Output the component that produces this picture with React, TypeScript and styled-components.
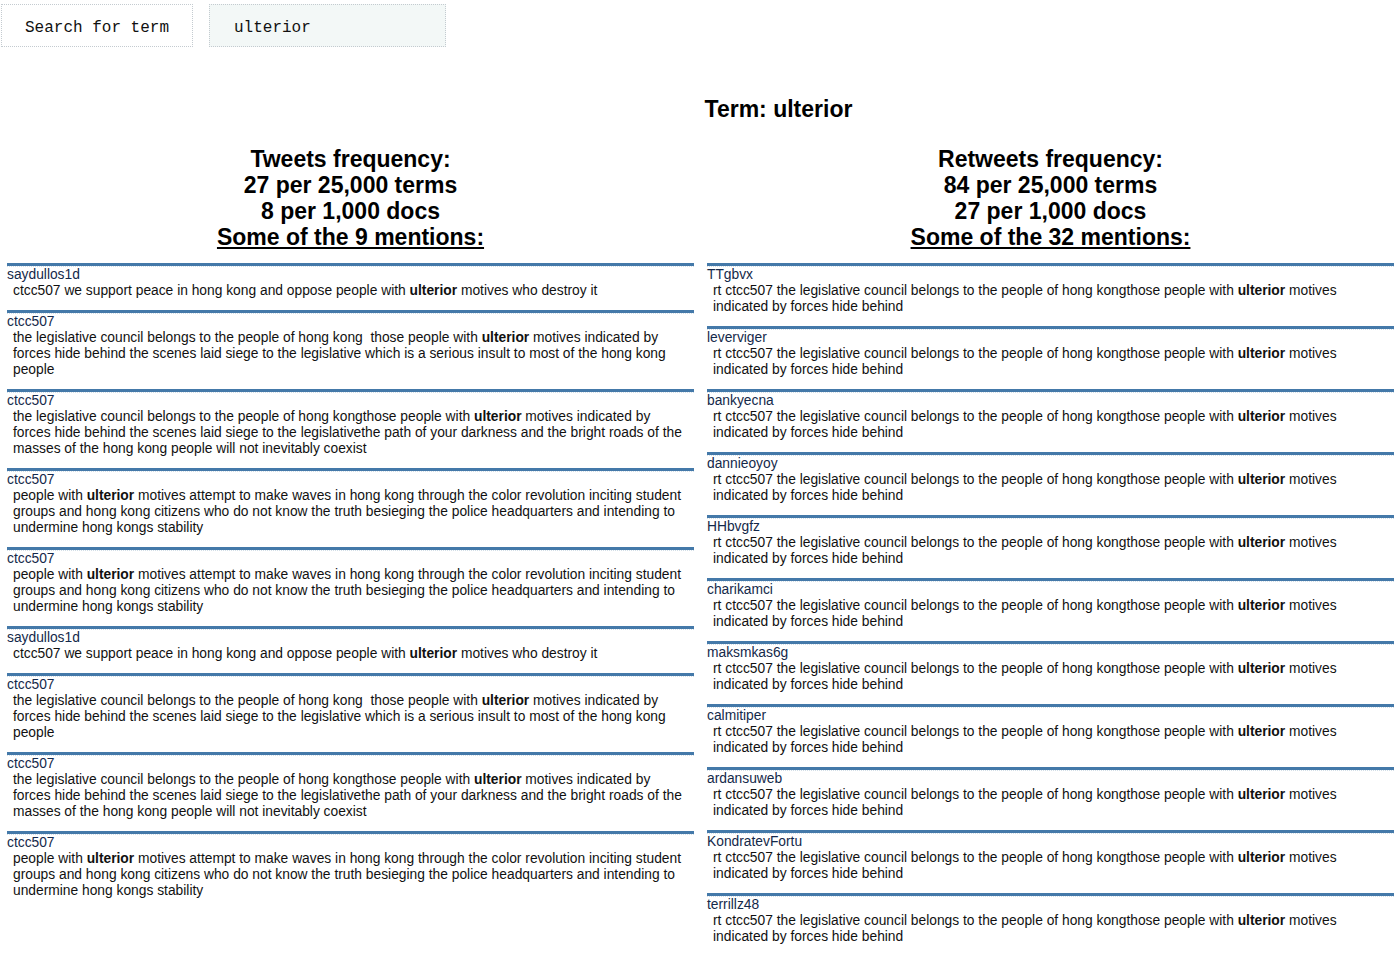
import React from "react";
import styled, { createGlobalStyle } from "styled-components";

const Global = createGlobalStyle`
  html, body { margin: 0; padding: 0; background: #fff; }
  body { font-family: "Liberation Sans", Arial, sans-serif; color: #000; }
`;

const Page = styled.div`
  width: 1400px;
  min-height: 954px;
`;

const SearchBar = styled.div`
  display: flex;
  gap: 16px;
  padding: 4px 0 0 1px;
`;

const SearchButton = styled.button`
  width: 192px;
  height: 43px;
  box-sizing: border-box;
  border: 1px dotted #c4cbd0;
  background: #fff;
  font-family: "Liberation Mono", "Courier New", monospace;
  font-size: 16px;
  color: #111;
  padding: 4px 0 0 23px;
  text-align: left;
`;

const SearchInput = styled.input`
  width: 237px;
  height: 43px;
  box-sizing: border-box;
  border: 1px dotted #c4cbd0;
  background: #f3f8f7;
  font-family: "Liberation Mono", "Courier New", monospace;
  font-size: 16px;
  color: #111;
  padding: 4px 0 0 24px;
  outline: none;
  caret-color: #000;
`;

const TermTitle = styled.h2`
  margin: 49px 0 0 0;
  padding-left: 157px;
  text-align: center;
  font-size: 23px;
  line-height: 26px;
  font-weight: bold;
`;

const Columns = styled.div`
  display: grid;
  grid-template-columns: 687px 687px;
  column-gap: 13px;
  padding: 0 6px 0 7px;
  margin-top: 24px;
`;

const Column = styled.section`
  display: flex;
  flex-direction: column;
`;

const ColumnHead = styled.h3`
  margin: 0 0 13px 0;
  text-align: center;
  font-size: 23px;
  line-height: 26px;
  font-weight: bold;
`;

const Underlined = styled.span`
  text-decoration: underline;
`;

const Entry = styled.div`
  border-top: 3px solid #4479a9;
  padding-bottom: 11px;
  font-size: 13.8px;
  line-height: 16px;
`;

const User = styled.div`
  border-top: 1px dotted #d3dfe8;
  color: #14294a;
`;

const Body = styled.div`
  padding: 0 10px 0 6px;
  white-space: pre-wrap;
  color: #111;
`;

type Tweet = { user: string; pre: string; post: string };

const L1 = {
  pre: "ctcc507 we support peace in hong kong and oppose people with ",
  post: " motives who destroy it",
};
const L2 = {
  pre: "the legislative council belongs to the people of hong kong  those people with ",
  post: " motives indicated by forces hide behind the scenes laid siege to the legislative which is a serious insult to most of the hong kong people",
};
const L3 = {
  pre: "the legislative council belongs to the people of hong kongthose people with ",
  post: " motives indicated by forces hide behind the scenes laid siege to the legislativethe path of your darkness and the bright roads of the masses of the hong kong people will not inevitably coexist",
};
const L4 = {
  pre: "people with ",
  post: " motives attempt to make waves in hong kong through the color revolution inciting student groups and hong kong citizens who do not know the truth besieging the police headquarters and intending to undermine hong kongs stability",
};

const tweets: Tweet[] = [
  { user: "saydullos1d", ...L1 },
  { user: "ctcc507", ...L2 },
  { user: "ctcc507", ...L3 },
  { user: "ctcc507", ...L4 },
  { user: "ctcc507", ...L4 },
  { user: "saydullos1d", ...L1 },
  { user: "ctcc507", ...L2 },
  { user: "ctcc507", ...L3 },
  { user: "ctcc507", ...L4 },
];

const RT = {
  pre: "rt ctcc507 the legislative council belongs to the people of hong kongthose people with ",
  post: " motives indicated by forces hide behind",
};

const retweets: Tweet[] = [
  "TTgbvx",
  "leverviger",
  "bankyecna",
  "dannieoyoy",
  "HHbvgfz",
  "charikamci",
  "maksmkas6g",
  "calmitiper",
  "ardansuweb",
  "KondratevFortu",
  "terrillz48",
].map((user) => ({ user, ...RT }));

function EntryList({ items }: { items: Tweet[] }) {
  return (
    <>
      {items.map((t, i) => (
        <Entry key={i}>
          <User>{t.user}</User>
          <Body>
            {t.pre}
            <b>ulterior</b>
            {t.post}
          </Body>
        </Entry>
      ))}
    </>
  );
}

export default function App() {
  return (
    <Page>
      <Global />
      <SearchBar>
        <SearchButton>Search for term</SearchButton>
        <SearchInput defaultValue="ulterior" autoFocus />
      </SearchBar>
      <TermTitle>Term: ulterior</TermTitle>
      <Columns>
        <Column>
          <ColumnHead>
            Tweets frequency:
            <br />
            27 per 25,000 terms
            <br />
            8 per 1,000 docs
            <br />
            <Underlined>Some of the 9 mentions:</Underlined>
          </ColumnHead>
          <EntryList items={tweets} />
        </Column>
        <Column>
          <ColumnHead>
            Retweets frequency:
            <br />
            84 per 25,000 terms
            <br />
            27 per 1,000 docs
            <br />
            <Underlined>Some of the 32 mentions:</Underlined>
          </ColumnHead>
          <EntryList items={retweets} />
        </Column>
      </Columns>
    </Page>
  );
}
